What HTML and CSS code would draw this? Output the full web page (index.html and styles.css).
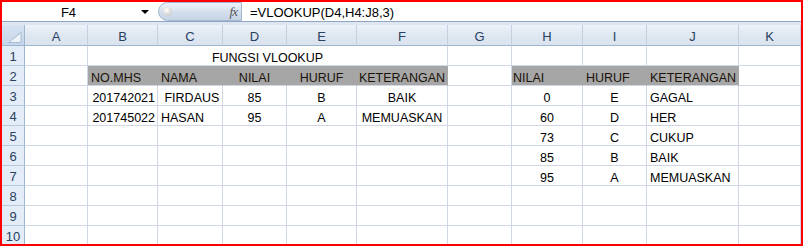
FILE: index.html
```html
<!DOCTYPE html>
<html lang="en">
	<head>
		<meta charset="UTF-8" />
		<title>FUNGSI VLOOKUP</title>
		<link rel="stylesheet" href="styles.css">
	</head>
	<body>
		<div class="frame">
			<div class="formula-bar">
				<div class="name-box">
					<span class="name">F4</span>
					<span class="drop"></span>
				</div>
				<div class="fx-pill">
					<span class="knob"></span>
					<span class="fx">fx</span>
				</div>
				<div class="formula">=VLOOKUP(D4,H4:J8,3)</div>
			</div>
			<div class="strip"></div>

			<div class="sheet">
				<div class="row head">
					<div class="corner">
						<svg width="14" height="11" viewBox="0 0 14 11"><polygon points="13,0.5 13,10.5 0.5,10.5" fill="#eef3f9" stroke="#a8bbd3" stroke-width="1" /></svg>
					</div>
					<div class="hd">A</div><div class="hd">B</div><div class="hd">C</div><div class="hd">D</div>
					<div class="hd">E</div><div class="hd">F</div><div class="hd">G</div><div class="hd">H</div>
					<div class="hd">I</div><div class="hd">J</div><div class="hd">K</div>
				</div>

				<div class="row">
					<div class="rh">1</div><div class="c"></div>
					<div class="c merged ctr">FUNGSI VLOOKUP</div>
					<div class="c"></div><div class="c"></div><div class="c"></div><div class="c"></div><div class="c"></div>
				</div>
				<div class="row">
					<div class="rh">2</div><div class="c"></div>
					<div class="c fill">NO.MHS</div>
					<div class="c fill">NAMA</div>
					<div class="c fill ctr">NILAI</div>
					<div class="c fill ctr">HURUF</div>
					<div class="c fill ctr">KETERANGAN</div>
					<div class="c"></div>
					<div class="c fill tight">NILAI</div>
					<div class="c fill">HURUF</div>
					<div class="c fill">KETERANGAN</div>
					<div class="c"></div>
				</div>
				<div class="row">
					<div class="rh">3</div><div class="c"></div>
					<div class="c num">201742021</div>
					<div class="c">&nbsp;FIRDAUS</div>
					<div class="c ctr">85</div>
					<div class="c ctr">B</div>
					<div class="c ctr">BAIK</div>
					<div class="c"></div>
					<div class="c ctr">0</div>
					<div class="c ctr">E</div>
					<div class="c">GAGAL</div>
					<div class="c"></div>
				</div>
				<div class="row">
					<div class="rh">4</div><div class="c"></div>
					<div class="c num">201745022</div>
					<div class="c">HASAN</div>
					<div class="c ctr">95</div>
					<div class="c ctr">A</div>
					<div class="c ctr">MEMUASKAN</div>
					<div class="c"></div>
					<div class="c ctr">60</div>
					<div class="c ctr">D</div>
					<div class="c">HER</div>
					<div class="c"></div>
				</div>
				<div class="row">
					<div class="rh">5</div><div class="c"></div><div class="c"></div><div class="c"></div><div class="c"></div>
					<div class="c"></div><div class="c"></div><div class="c"></div>
					<div class="c ctr">73</div>
					<div class="c ctr">C</div>
					<div class="c">CUKUP</div>
					<div class="c"></div>
				</div>
				<div class="row">
					<div class="rh">6</div><div class="c"></div><div class="c"></div><div class="c"></div><div class="c"></div>
					<div class="c"></div><div class="c"></div><div class="c"></div>
					<div class="c ctr">85</div>
					<div class="c ctr">B</div>
					<div class="c">BAIK</div>
					<div class="c"></div>
				</div>
				<div class="row">
					<div class="rh">7</div><div class="c"></div><div class="c"></div><div class="c"></div><div class="c"></div>
					<div class="c"></div><div class="c"></div><div class="c"></div>
					<div class="c ctr">95</div>
					<div class="c ctr">A</div>
					<div class="c">MEMUASKAN</div>
					<div class="c"></div>
				</div>
				<div class="row">
					<div class="rh">8</div><div class="c"></div><div class="c"></div><div class="c"></div><div class="c"></div><div class="c"></div>
					<div class="c"></div><div class="c"></div><div class="c"></div><div class="c"></div><div class="c"></div><div class="c"></div>
				</div>
				<div class="row">
					<div class="rh">9</div><div class="c"></div><div class="c"></div><div class="c"></div><div class="c"></div><div class="c"></div>
					<div class="c"></div><div class="c"></div><div class="c"></div><div class="c"></div><div class="c"></div><div class="c"></div>
				</div>
				<div class="row">
					<div class="rh">10</div><div class="c"></div><div class="c"></div><div class="c"></div><div class="c"></div><div class="c"></div>
					<div class="c"></div><div class="c"></div><div class="c"></div><div class="c"></div><div class="c"></div><div class="c"></div>
				</div>
			</div>
		</div>
	</body>
</html>
```

FILE: styles.css
```css
/* Spreadsheet screenshot */
body {
	margin: 0;
	padding: 0;
	background-color: #fff;
	font-family: "Liberation Sans", Arial, sans-serif;
	font-size: 12.5px;
	color: #000;
}
.frame {
	width: 803px;
	height: 246px;
	box-sizing: border-box;
	border: 2px solid #ff0000;
	overflow: hidden;
	background-color: #fff;
}

/* formula bar */
.formula-bar {
	display: flex;
	height: 19px;
	border-bottom: 1px solid #8ea6c4;
}
.name-box {
	width: 150px;
	display: flex;
	align-items: center;
}
.name {
	flex: 1;
	text-align: center;
	font-size: 13px;
	line-height: 19px;
	padding-top: 1px;
	padding-right: 6px;
}
.drop {
	width: 0;
	height: 0;
	border-left: 4px solid transparent;
	border-right: 4px solid transparent;
	border-top: 4px solid #000;
	margin-right: 3px;
}
.fx-pill {
	width: 84px;
	margin-left: 6px;
	box-sizing: border-box;
	border: 1px solid #a2b6d0;
	border-radius: 10px 0 0 10px;
	background: linear-gradient(#eef3f9, #d3deec 55%, #c6d4e7);
	display: flex;
	align-items: center;
	justify-content: space-between;
	padding: 0 4px;
}
.knob {
	width: 9px;
	height: 9px;
	border-radius: 50%;
	background: radial-gradient(circle at 40% 35%, #fff, #d7d7d7 60%, #b9b9b9);
}
.fx {
	font-family: "Liberation Serif", serif;
	font-style: italic;
	font-size: 13px;
	color: #555;
	letter-spacing: -1px;
}
.formula {
	flex: 1;
	padding-left: 8px;
	font-size: 13px;
	line-height: 19px;
	padding-top: 1px;
}
.strip {
	height: 3px;
	background-color: #dde6f1;
}

/* grid */
.row {
	display: grid;
	grid-template-columns: 23px 63px 70px 65px 64px 70px 91px 64px 71px 64px 92px 62px;
}
.row.head {
	height: 21px;
}
.corner {
	box-sizing: border-box;
	border-right: 1px solid #9eb6ce;
	border-bottom: 1px solid #9eb6ce;
	background: linear-gradient(#d6e2f0, #c6d6ea);
	display: flex;
	align-items: flex-end;
	justify-content: flex-end;
	padding: 0 2px 2px 0;
}
.hd {
	box-sizing: border-box;
	border-right: 1px solid #c3d0e0;
	border-bottom: 1px solid #9eb6ce;
	background: linear-gradient(#eef3f9, #dfe7f1 50%, #d9e2ee);
	color: #28415f;
	font-size: 13px;
	text-align: center;
	padding-top: 4px;
	line-height: 16px;
}
.rh {
	box-sizing: border-box;
	height: 20px;
	border-right: 1px solid #9eb6ce;
	border-bottom: 1px solid #b9c9dc;
	background-color: #e4ecf7;
	color: #28415f;
	font-size: 13px;
	text-align: center;
	padding-top: 3px;
	line-height: 16px;
}
.c {
	box-sizing: border-box;
	height: 20px;
	border-right: 1px solid #d0d7e5;
	border-bottom: 1px solid #d0d7e5;
	padding: 4px 2px 0 3px;
	line-height: 16px;
	white-space: nowrap;
}
.merged {
	grid-column: span 5;
}
.fill {
	background-color: #a6a6a6;
	border-right-color: #a6a6a6;
	color: #1a1208;
}
.tight {
	padding-left: 1px;
}
.ctr {
	text-align: center;
	padding-left: 1px;
	padding-right: 1px;
}
.num {
	text-align: right;
	padding-right: 2px;
}
```
